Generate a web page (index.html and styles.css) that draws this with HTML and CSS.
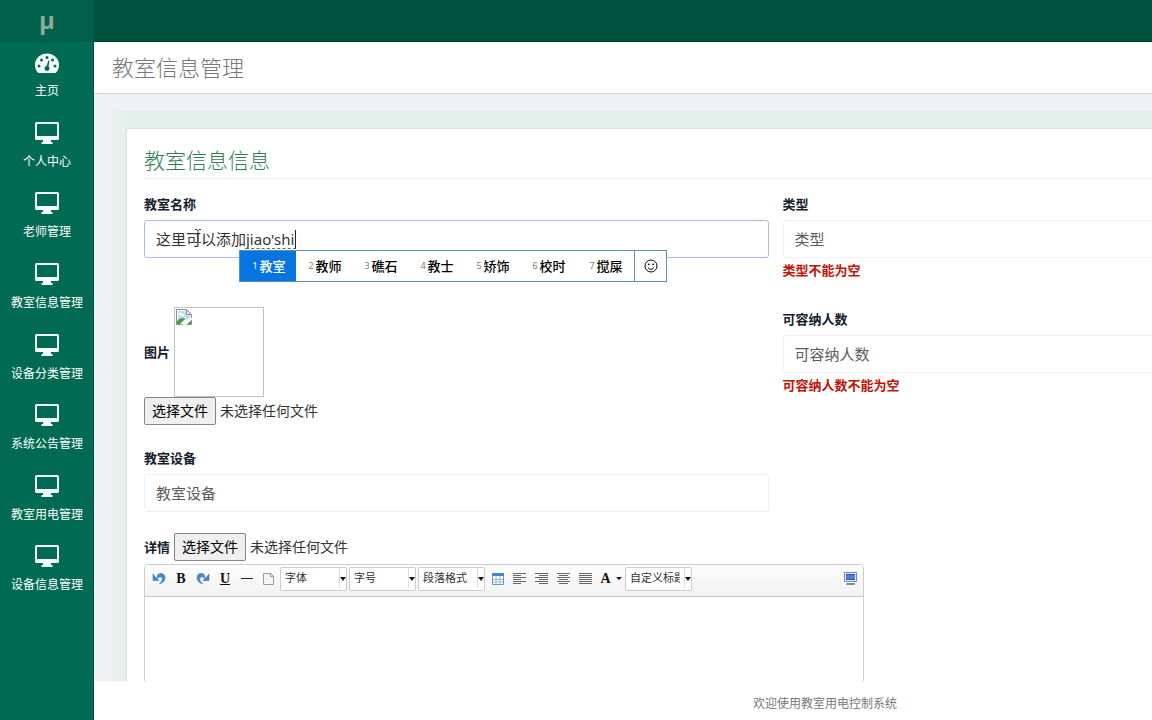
FILE: index.html
```html
<!DOCTYPE html>
<html lang="zh-CN">
<head>
<meta charset="utf-8">
<meta name="viewport" content="width=device-width, initial-scale=1">
<title>教室信息管理</title>
<link rel="stylesheet" href="styles.css">
</head>
<body>
<svg class="sprite" aria-hidden="true">
  <symbol id="monitor" viewBox="0 0 26 24">
    <path fill-rule="evenodd" d="M2.500 0h21Q25 0 25 1.500v15Q25 18 23.500 18H17v2h1.500v2h-11v-2H9v-2H2.500Q1 18 1 16.500v-15Q1 0 2.500 0ZM3 2v12h20V2Z"/>
  </symbol>
  <symbol id="gauge" viewBox="0 0 26 24">
    <path d="M4.500 22Q1 19 1 14a12 11.500 0 0 1 24 0Q25 19 21.500 22Z"/>
    <g class="gauge-mark"><circle cx="5" cy="15" r="1.500"/><circle cx="7.500" cy="9" r="1.500"/><circle cx="13" cy="6.500" r="1.500"/><circle cx="18.500" cy="9" r="1.500"/><circle cx="21" cy="15" r="1.500"/><circle cx="13" cy="17.500" r="2.400"/><path d="m12 17.500 2.300-8 1.200.3L14 18Z"/></g>
  </symbol>
</svg>
<div class="app">
  <aside class="sidebar">
    <a class="brand" href="#">μ</a>
    <nav class="nav">
      <a class="nav-item" href="#"><svg class="nav-icon"><use href="#gauge"/></svg>主页</a>
      <a class="nav-item" href="#"><svg class="nav-icon"><use href="#monitor"/></svg>个人中心</a>
      <a class="nav-item" href="#"><svg class="nav-icon"><use href="#monitor"/></svg>老师管理</a>
      <a class="nav-item" href="#"><svg class="nav-icon"><use href="#monitor"/></svg>教室信息管理</a>
      <a class="nav-item" href="#"><svg class="nav-icon"><use href="#monitor"/></svg>设备分类管理</a>
      <a class="nav-item" href="#"><svg class="nav-icon"><use href="#monitor"/></svg>系统公告管理</a>
      <a class="nav-item" href="#"><svg class="nav-icon"><use href="#monitor"/></svg>教室用电管理</a>
      <a class="nav-item" href="#"><svg class="nav-icon"><use href="#monitor"/></svg>设备信息管理</a>
    </nav>
  </aside>
  <div class="main">
    <div class="topbar"></div>
    <header class="page-header"><h1 class="page-title">教室信息管理</h1></header>
    <main class="content">
      <div class="halo">
        <section class="panel">
          <h2 class="panel-title">教室信息信息</h2>
          <form class="form">
            <div class="field">
              <label class="label" for="name">教室名称</label>
              <div class="input-wrap">
                <input class="input input-active" id="name" type="text" value="这里可以添加jiao'shi">
                <span class="composition"></span>
                <svg class="cursor" viewBox="0 0 8 14"><path d="M1 .5h2l1 1 1-1h2M4 1.500v11M1 13.500h2l1-1 1 1h2"/></svg>
                <div class="ime">
                  <button type="button" class="candidate candidate-on"><small>1</small>教室</button>
                  <button type="button" class="candidate"><small>2</small>教师</button>
                  <button type="button" class="candidate"><small>3</small>礁石</button>
                  <button type="button" class="candidate"><small>4</small>教士</button>
                  <button type="button" class="candidate"><small>5</small>矫饰</button>
                  <button type="button" class="candidate"><small>6</small>校时</button>
                  <button type="button" class="candidate"><small>7</small>搅屎</button>
                  <button type="button" class="emoji" aria-label="表情"><svg viewBox="0 0 14 14"><circle cx="7" cy="7" r="6"/><path d="M3.800 8.300q3.200 4 6.400 0"/><circle class="eye" cx="4.800" cy="5.300" r=".9"/><circle class="eye" cx="9.200" cy="5.300" r=".9"/></svg></button>
                </div>
              </div>
            </div>
            <div class="field">
              <label class="label" for="type">类型</label>
              <input class="input" id="type" type="text" placeholder="类型">
              <p class="error">类型不能为空</p>
            </div>
            <div class="field">
              <div class="picture-row">
                <label class="picture-label" for="picture">图片</label>
                <div class="preview"><svg viewBox="0 0 16 16"><path fill="#fff" stroke="#8a8f94" d="M.5.500h10l5 5v10H.5Z"/><path fill="#c5dcf5" d="M2 2h8v4h4v4L2 13Z"/><path fill="#fff" d="M3 5q1-2 3 0h2v1.500H3Z"/><path fill="#4c9e43" d="M1 15v-3q4-5 8-2l-5 5Z"/><path fill="#4c9e43" d="m11 15 4-4v4Z"/><path fill="#fff" d="m6 16 8-7h2v1.500L10 16Z"/><path fill="#e9edf1" stroke="#8a8f94" d="M10.500.500v5h5Z"/></svg></div>
              </div>
              <div class="file-row">
                <input class="file-input" id="picture" type="file">
                <label class="file-button" for="picture">选择文件</label><span>未选择任何文件</span>
              </div>
            </div>
            <div class="field">
              <label class="label" for="capacity">可容纳人数</label>
              <input class="input" id="capacity" type="text" placeholder="可容纳人数">
              <p class="error">可容纳人数不能为空</p>
            </div>
            <div class="field field-left">
              <label class="label" for="device">教室设备</label>
              <input class="input" id="device" type="text" placeholder="教室设备">
            </div>
            <div class="field field-left">
              <div class="file-row">
                <label class="picture-label" for="detail">详情</label>
                <input class="file-input" id="detail" type="file">
                <label class="file-button" for="detail">选择文件</label><span>未选择任何文件</span>
              </div>
              <div class="editor">
                <div class="toolbar">
                  <button type="button" class="tool" aria-label="撤销"><svg viewBox="0 0 16 16"><path class="arrow" d="M2 3v6.500h6L6 7.500Q9 4.500 11 6.500q1.500 2.500-2.500 6.500 5.500-2 5.500-6.500Q13.500 2 9 2.500 7 3 6.500 4L6 7.500 3.500 5Z"/></svg></button>
                  <button type="button" class="tool tool-letter">B</button>
                  <button type="button" class="tool" aria-label="重做"><svg viewBox="0 0 16 16"><path class="arrow" d="M14 3v6.500H8l2-2Q7 4.500 5 6.500 3.500 9 7.500 13 2 11 2 6.500 2.500 2 7 2.500 9 3 9.500 4l.5 3.500L12.500 5Z"/></svg></button>
                  <button type="button" class="tool tool-letter tool-under">U</button>
                  <button type="button" class="tool" aria-label="分隔线"><svg viewBox="0 0 16 16"><path class="line" d="M2 7.500h12"/></svg></button>
                  <button type="button" class="tool" aria-label="新建"><svg viewBox="0 0 16 16"><path fill="#f4f4f4" stroke="#999" d="M2.500 2.500h7l3 3v8h-10ZM9.500 2.500v3h3"/></svg></button>
                  <span class="select-wrap"><select class="select" aria-label="字体"><option>字体</option></select></span>
                  <span class="select-wrap"><select class="select" aria-label="字号"><option>字号</option></select></span>
                  <span class="select-wrap"><select class="select" aria-label="段落格式"><option>段落格式</option></select></span>
                  <button type="button" class="tool" aria-label="表格"><svg viewBox="0 0 16 16"><path fill="#fff" stroke="#6d94c7" d="M2.500 2.500h11v11h-11Z"/><path fill="#4b82c9" d="M2 2h12v3H2Z"/><path stroke="#9ab5da" d="M3 8.500h10M3 11h10M6 5v8M10 5v8"/></svg></button>
                  <button type="button" class="tool" aria-label="左对齐"><svg viewBox="0 0 16 16"><path class="line thin" d="M1 2.500h13M1 4.500h8M1 6.500h13M1 8.500h8M1 10.500h13M1 12.500h8"/></svg></button>
                  <button type="button" class="tool" aria-label="右对齐"><svg viewBox="0 0 16 16"><path class="line thin" d="M1 2.500h13M5 4.500h9M1 6.500h13M5 8.500h9M1 10.500h13M5 12.500h9"/></svg></button>
                  <button type="button" class="tool" aria-label="居中"><svg viewBox="0 0 16 16"><path class="line thin" d="M1 2.500h13M3 4.500h9M1 6.500h13M3 8.500h9M1 10.500h13M3 12.500h9"/></svg></button>
                  <button type="button" class="tool" aria-label="两端对齐"><svg viewBox="0 0 16 16"><path class="line thin" d="M1 2.500h13M1 4.500h13M1 6.500h13M1 8.500h13M1 10.500h13M1 12.500h13"/></svg></button>
                  <button type="button" class="tool tool-letter tool-color">A<i class="caret"></i></button>
                  <span class="select-wrap"><select class="select" aria-label="自定义标题"><option>自定义标题</option></select></span>
                  <button type="button" class="tool tool-last" aria-label="全屏"><svg viewBox="0 0 16 16"><path fill="#dfe8f4" stroke="#7589a8" d="M2.500 1.500h12v9h-12ZM4.500 12.500h8v1h-8Z"/><path fill="#2455b5" d="M4 3h9v6H4Z"/><path stroke="#83a9e8" d="M4 5h9M4 7h9"/></svg></button>
                </div>
                <div class="editor-body" contenteditable="true" aria-label="详情内容"></div>
              </div>
            </div>
          </form>
        </section>
      </div>
    </main>
    <footer class="footer">欢迎使用教室用电控制系统</footer>
  </div>
</div>
</body>
</html>
```
FILE: styles.css
```css
* { box-sizing: border-box; }
body {
  margin: 0;
  overflow: hidden;
  background: #fff;
  color: #333;
  font: 14px/20px "Noto Sans", "Noto Sans CJK SC", sans-serif;
}
button, input, select { font: inherit; color: inherit; }
button { border: 0; padding: 0; background: none; }
.sprite { display: none; }
.app { display: flex; height: 100vh; }

.sidebar { flex: 0 0 94px; background: #006a52; box-shadow: inset -1px 0 #005440; }
.brand {
  display: block;
  height: 42px;
  background: #00604b;
  color: #8fa9a0;
  font: bold 24px/40px "Open Sans", sans-serif;
  text-align: center;
  text-decoration: none;
}
.nav { display: grid; grid-auto-rows: 1fr; min-height: 565px; }
.nav-item {
  display: flex;
  flex-direction: column;
  align-items: center;
  gap: 7px;
  padding-top: 9px;
  color: #fff;
  font-size: 12px;
  line-height: 18px;
  text-decoration: none;
}
.nav-icon { width: 26px; height: 24px; fill: #f2fffb; }
.gauge-mark { fill: #006a52; }

.main { flex: 1 0 1462px; min-width: 0; display: flex; flex-direction: column; }
.topbar { flex: 0 0 42px; background: #00523f; border-bottom: 1px solid #00402f; }
.page-header { padding: 10px 18px; border-bottom: 1px solid #d4d5d9; }
.page-title { margin: 0; color: #777; font-size: 22px; line-height: 31px; font-weight: 300; }
.content { flex: 1; min-height: 0; overflow: hidden; padding: 17px 117px 0 18px; background: #eff0f4; }
.halo { padding: 17px 14px 0; background: linear-gradient(90deg, #e9f1ef, #e2efea 14px); }
.panel { padding: 18px 17px 24px; background: #fff; border: 1px solid #dcdfe3; border-radius: 3px 3px 0 0; }
.panel-title {
  margin: 0 0 13px;
  padding-bottom: 5px;
  border-bottom: 1px solid #eee;
  color: #2f7d56;
  font-size: 21px;
  line-height: 26px;
  font-weight: 300;
}
.form { display: grid; grid-template-columns: repeat(2, minmax(0, 1fr)); gap: 21px 14px; }
.field { min-width: 0; }
.field-left { grid-column: 1; }
.label { display: block; padding-bottom: 4px; line-height: 24px; }
.label, .picture-label { color: #15202e; font-size: 13px; font-weight: bold; }
.input-wrap { position: relative; }
.input {
  display: block;
  width: 100%;
  height: 38px;
  padding: 0 11px;
  border: 1px solid #eef0f2;
  border-radius: 3px;
  background: #fff;
  font-size: 15px;
  outline: 0;
}
.input::placeholder { color: #5c5c5c; opacity: 1; }
.input-active { padding-bottom: 1px; border-color: #a9c0dd; }
.error { margin: 0; padding-bottom: 4px; color: #bd1508; font-size: 13px; line-height: 24px; font-weight: bold; }
.composition {
  position: absolute;
  top: 10px;
  left: 102px;
  width: 50px;
  height: 19px;
  border-right: 1px solid #222;
  border-bottom: 1px dashed #666;
}
.cursor { position: absolute; top: 9px; left: 50px; width: 8px; height: 14px; fill: none; stroke: #333; }
.ime {
  position: absolute;
  z-index: 1;
  top: 30px;
  left: 95px;
  display: flex;
  height: 32px;
  border: 1px solid #5e8fb9;
  background: #fff;
}
.candidate {
  display: flex;
  align-items: center;
  justify-content: center;
  gap: 2px;
  width: 56px;
  padding-left: 2px;
  color: #000;
  font-size: 13px;
  font-weight: 500;
}
.candidate:nth-child(7) { width: 58px; }
.candidate small { color: #777; font-size: 9px; font-weight: 400; }
.candidate-on, .candidate-on small { background: #0575e2; color: #fff; }
.emoji { width: 32px; border-left: 1px solid #5e8fb9; line-height: 0; }
.emoji svg { width: 14px; height: 14px; fill: none; stroke: #000; }
.emoji .eye { fill: #000; stroke: none; }

.picture-row { display: flex; align-items: center; gap: 4px; }
.preview { width: 90px; height: 90px; padding: 1px; border: 1px solid #c4c4c4; line-height: 0; }
.preview svg { width: 16px; height: 16px; }
.file-row { display: flex; align-items: center; gap: 4px; font-size: 14px; }
.file-input { position: absolute; width: 1px; height: 1px; opacity: 0; }
.file-button {
  padding: 3px 7px;
  border: 1px solid #858585;
  border-radius: 2px;
  background: #efefef;
  color: #000;
}

.editor { width: 720px; margin-top: 3px; border: 1px solid #ccc; border-radius: 4px 4px 0 0; }
.toolbar {
  display: flex;
  align-items: center;
  height: 32px;
  padding: 0 2px 3px 3px;
  border-bottom: 1px solid #c4c4c4;
  border-radius: 3px 3px 0 0;
  background: linear-gradient(#fdfdfd, #f1f1f1);
}
.tool { display: flex; flex: 0 0 auto; align-items: center; justify-content: center; width: 22px; height: 24px; padding-bottom: 1px; }
.tool svg { width: 16px; height: 16px; fill: none; }
.tool .arrow { fill: #4787cd; stroke: #2c64a6; stroke-width: .5; }
.tool .line { stroke: #222; }
.tool .thin { stroke: #666; }
.tool-letter { color: #111; font: bold 14px/20px "Liberation Serif", serif; }
.tool-under { text-decoration: underline; }
.tool-color { width: 28px; gap: 5px; }
.caret { border: 3px solid transparent; border-top-color: #111; border-bottom: 0; }
.tool-last { margin-left: auto; }
.select-wrap {
  position: relative;
  flex: 0 0 auto;
  width: 67px;
  height: 24px;
  margin-right: 2px;
  border: 1px solid #ccc;
  border-radius: 2px;
  background: #fff;
}
.select-wrap::after {
  content: "";
  position: absolute;
  top: 9px;
  right: 0;
  border: 3px solid transparent;
  border-top: 4px solid #111;
  border-bottom: 0;
  pointer-events: none;
}
.select {
  display: block;
  width: 59px;
  height: 20px;
  padding: 0 4px;
  border: 0;
  border-right: 1px solid #ddd;
  background: none;
  color: #333;
  font-size: 11px;
  line-height: 20px;
  appearance: none;
  outline: 0;
}
.editor-body { min-height: 200px; }
.footer { padding: 14px 0 7px; background: #fff; color: #777; font-size: 12px; line-height: 18px; text-align: center; }
```
